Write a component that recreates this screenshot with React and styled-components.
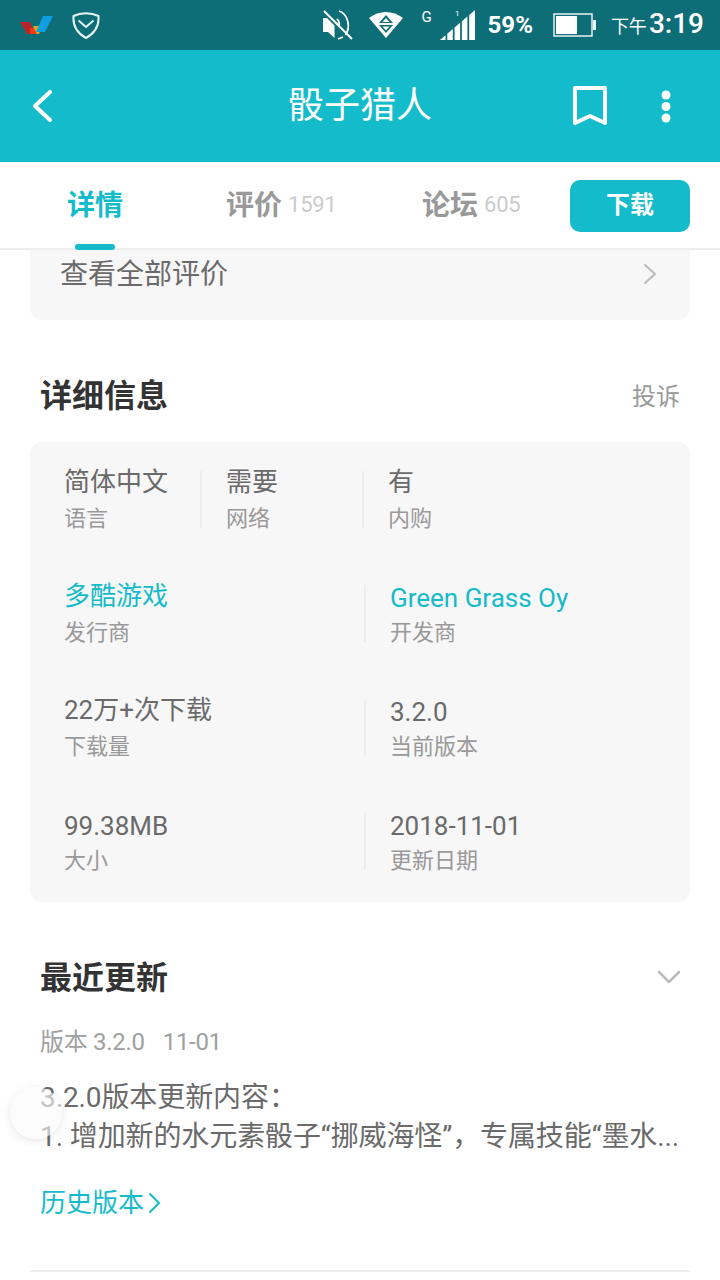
import React from 'react';
import styled, { createGlobalStyle } from 'styled-components';

const TEAL = '#14bbca';

const Global = createGlobalStyle`
  html, body {
    margin: 0;
    padding: 0;
    background: #fff;
  }
  body {
    font-family: Roboto, 'Noto Sans CJK SC', sans-serif;
  }
  * {
    box-sizing: border-box;
  }
`;

const Page = styled.div`
  position: relative;
  width: 720px;
  height: 1280px;
  overflow: hidden;
  background: #fff;
`;

const StatusBar = styled.div`
  height: 50px;
  background: #0e6e78;
  display: flex;
  align-items: center;
  padding: 0 16px 0 20px;
  color: #fff;
`;

const StatusLeft = styled.div`
  display: flex;
  align-items: center;
  gap: 18px;
  flex: 1;
`;

const StatusRight = styled.div`
  display: flex;
  align-items: center;
`;

const StatusIcon = styled.span`
  display: flex;
  margin-right: ${(p) => p.$mr}px;
`;

const NetType = styled.span`
  font-size: 15px;
  line-height: 15px;
  width: 18px;
  margin-bottom: 16px;
`;

const Percent = styled.span`
  font-size: 24px;
  font-weight: 700;
  margin: 0 20px 0 13px;
  line-height: 50px;
`;

const Clock = styled.span`
  display: flex;
  align-items: baseline;
  font-size: 28px;
  font-weight: 500;
  margin-left: 14px;
  line-height: 50px;
`;

const ClockPrefix = styled.span`
  font-size: 18px;
  font-weight: 400;
  margin-right: 2px;
`;

const Header = styled.div`
  height: 112px;
  background: ${TEAL};
  display: grid;
  grid-template-columns: 180px 1fr 180px;
  align-items: center;
  color: #fff;
`;

const Back = styled.div`
  display: flex;
  padding-left: 33px;
`;

const Title = styled.div`
  text-align: center;
  font-size: 36px;
  line-height: 110px;
`;

const HeaderActions = styled.div`
  display: flex;
  justify-content: flex-end;
  align-items: center;
  gap: 54px;
  padding-right: 49px;
`;

const Tabs = styled.div`
  position: relative;
  z-index: 2;
  height: 88px;
  background: #fff;
  border-bottom: 2px solid #eeeeee;
  display: flex;
  align-items: flex-start;
  padding: 18px 30px 0 0;
`;

const Tab = styled.div`
  position: relative;
  height: 68px;
  width: ${(p) => p.$w}px;
  margin-left: ${(p) => p.$ml}px;
  display: flex;
  align-items: baseline;
  white-space: nowrap;
  line-height: 51px;
  font-size: 28px;
  font-weight: 700;
  color: ${(p) => (p.$active ? TEAL : '#999999')};
`;

const TabCount = styled.span`
  align-self: flex-start;
  font-size: 22px;
  line-height: 50px;
  font-weight: 400;
  letter-spacing: -0.2px;
  color: #cccccc;
  margin-left: 6px;
`;

const Indicator = styled.div`
  position: absolute;
  left: 8px;
  bottom: -2px;
  width: 40px;
  height: 6px;
  border-radius: 3px;
  background: ${TEAL};
`;

const DownloadButton = styled.div`
  margin-left: auto;
  width: 120px;
  height: 52px;
  border-radius: 10px;
  background: ${TEAL};
  color: #fff;
  font-size: 24px;
  font-weight: 700;
  text-align: center;
  line-height: 50px;
`;

const ReviewCard = styled.div`
  margin: 0 30px;
  height: 70px;
  background: #f7f7f7;
  border-radius: 0 0 12px 12px;
  display: flex;
  justify-content: space-between;
  padding: 0 33px 0 30px;
  color: #6a6a6a;
  font-size: 28px;
  line-height: 50px;
`;

const ReviewArrow = styled.div`
  padding-top: 13px;
  line-height: 0;
`;

const SectionHead = styled.div`
  margin-top: 50px;
  margin-bottom: ${(p) => p.$mb}px;
  padding: 0 40px 4px;
  height: 50px;
  display: flex;
  justify-content: space-between;
  align-items: center;
`;

const SectionTitle = styled.div`
  font-size: 32px;
  font-weight: 700;
  color: #333333;
`;

const Complain = styled.div`
  font-size: 24px;
  color: #999999;
  margin-top: 2px;
`;

const DownArrow = styled.div`
  display: flex;
  margin: 4px -1px 0 0;
`;

const InfoCard = styled.div`
  margin: 0 30px;
  height: 460px;
  background: #f7f7f7;
  border-radius: 12px;
  padding: 21px 0 0 34px;
  display: grid;
  grid-auto-rows: 114px;
`;

const InfoRow = styled.div`
  display: grid;
  grid-template-columns: ${(p) => p.$cols};
  align-items: start;
`;

const Cell = styled.div`
  height: 60px;
  padding-left: ${(p) => (p.$divided ? 26 : 0)}px;
  position: relative;
  &::before {
    content: '';
    display: ${(p) => (p.$divided ? 'block' : 'none')};
    position: absolute;
    left: 0;
    top: 8px;
    bottom: -5px;
    width: 2px;
    background: #ededed;
  }
`;

const CellValue = styled.div`
  font-size: 26px;
  height: 38px;
  line-height: 38px;
  white-space: nowrap;
  padding-top: ${(p) => (p.$latin ? 2 : 0)}px;
  color: ${(p) => (p.$link ? TEAL : '#6a6a6a')};
`;

const CellLabel = styled.div`
  font-size: 22px;
  line-height: 36px;
  color: #999999;
  white-space: nowrap;
`;

const Updates = styled.div`
  padding: 0 40px;
`;

const VersionLine = styled.div`
  margin-top: 22px;
  font-size: 24px;
  color: #a0a0a0;
  line-height: 36px;
  display: flex;
  gap: 18px;
  letter-spacing: -0.3px;
`;

const Notes = styled.div`
  margin-top: 18px;
  font-size: 28px;
  line-height: 39px;
  color: #6a6a6a;
  white-space: nowrap;
  letter-spacing: -0.1px;
`;

const HistoryLink = styled.div`
  margin-top: 27px;
  display: flex;
  align-items: center;
  gap: 4px;
  color: ${TEAL};
  font-size: 26px;
  line-height: 40px;
`;

const Rule = styled.div`
  margin: 47px 30px 0;
  height: 2px;
  background: #eeeeee;
`;

const FloatBall = styled.div`
  position: absolute;
  left: 10px;
  top: 1087px;
  width: 52px;
  height: 52px;
  border-radius: 50%;
  background: rgba(250, 250, 250, 0.62);
  box-shadow: 0 2px 10px rgba(0, 0, 0, 0.1);
`;

function AppLogo() {
  return (
    <svg width="34" height="19" viewBox="0 0 34 19">
      <path d="M0 6h10l5 12H7z" fill="#b9232a" />
      <path d="M10 12h6l2 6h-8z" fill="#f23c10" />
      <path d="M13 10h9l-3 8h-2z" fill="#d9ad1f" />
      <path d="M23 0h10l-8 16h-9z" fill="#0f9fe0" />
    </svg>
  );
}

function ShieldIcon() {
  return (
    <svg width="28" height="27" viewBox="0 0 28 27" fill="none" stroke="#e6f4f5" strokeWidth="2">
      <path d="M14 1.2c4.500 0 8.500 .8 12.500 2.800 .6 8-1.500 16-12.500 22C3 20 .9 12 1.500 4 5.500 2 9.500 1.200 14 1.200z" />
      <path d="M6.500 8.500 14 15l7.500-6.500" />
    </svg>
  );
}

function MuteIcon() {
  return (
    <svg width="30" height="30" viewBox="0 0 30 30" fill="none" stroke="#fff">
      <path d="M0 8h4l7.500 7.500V28L5 22H0z" fill="#fff" stroke="none" />
      <path d="M14 9c2 2 2.500 5 2 7M16 1c9 3 12 16 6.500 24M15 29l5-2" strokeWidth="1.800" />
      <path d="M1 1l28 28" strokeWidth="2" />
    </svg>
  );
}

function WifiIcon() {
  return (
    <svg width="34" height="26" viewBox="0 0 34 26">
      <path d="M0 6C10-2 24-2 34 6L17 26z" fill="#fff" />
      <path d="M17 3l7 8H10z" fill="#0e6e78" />
      <path d="M17 6l3.500 4h-7z" fill="#fff" />
      <path d="M10 13h14l-7 8z" fill="#0e6e78" />
      <path d="M13.500 14.500h7L17 18.500z" fill="#fff" />
    </svg>
  );
}

const SIGNAL_BARS = [[0, 5.5], [7.3, 12.8], [14.6, 20.1], [21.9, 27.4], [29.2, 35]];

function SignalIcon() {
  const topAt = (x) => 31 - (x * 30) / 35;
  return (
    <svg width="35" height="32" viewBox="0 0 35 32" fill="#fff">
      <text x="15" y="7" fontSize="8" fontFamily="Roboto">1</text>
      {SIGNAL_BARS.map(([a, b]) => (
        <path key={a} d={`M${a} ${topAt(a)}L${b} ${topAt(b)}V31H${a}z`} />
      ))}
    </svg>
  );
}

function BatteryIcon() {
  return (
    <svg width="44" height="24" viewBox="0 0 44 24">
      <rect x="1" y="1" width="38" height="22" fill="none" stroke="#e8f2f3" strokeWidth="1.500" />
      <rect x="3" y="3" width="21" height="18" fill="#fff" />
      <rect x="40" y="7" width="3" height="10" fill="#e8f2f3" />
    </svg>
  );
}

const CHEVRON_POINTS = {
  left: (w, h) => `M${w - 2} 2 2 ${h / 2} ${w - 2} ${h - 2}`,
  right: (w, h) => `M2 2 ${w - 2} ${h / 2} 2 ${h - 2}`,
  down: (w, h) => `M2 2 ${w / 2} ${h - 2} ${w - 2} 2`,
};

function Chevron({ w, h, color, sw, dir = 'right' }) {
  return (
    <svg width={w} height={h} viewBox={`0 0 ${w} ${h}`} fill="none" stroke={color} strokeWidth={sw} strokeLinecap="round" strokeLinejoin="round">
      <path d={CHEVRON_POINTS[dir](w, h)} />
    </svg>
  );
}

function BookmarkIcon() {
  return (
    <svg width="34" height="40" viewBox="0 0 34 40" fill="none" stroke="#fff" strokeWidth="4" strokeLinejoin="round">
      <path d="M2 2h30v35l-15-7-15 7z" />
    </svg>
  );
}

function MoreIcon() {
  return (
    <svg width="10" height="33" viewBox="0 0 10 33" fill="#fff">
      <circle cx="5" cy="5" r="4.500" />
      <circle cx="5" cy="16.500" r="4.500" />
      <circle cx="5" cy="28" r="4.500" />
    </svg>
  );
}

const INFO_ROWS = [
  {
    cols: '136px 162px 1fr',
    cells: [
      { value: '简体中文', label: '语言' },
      { value: '需要', label: '网络', divided: true },
      { value: '有', label: '内购', divided: true },
    ],
  },
  {
    cols: '300px 1fr',
    cells: [
      { value: '多酷游戏', label: '发行商', link: true },
      { value: 'Green Grass Oy', label: '开发商', link: true, latin: true, divided: true },
    ],
  },
  {
    cols: '300px 1fr',
    cells: [
      { value: '22万+次下载', label: '下载量' },
      { value: '3.2.0', label: '当前版本', latin: true, divided: true },
    ],
  },
  {
    cols: '300px 1fr',
    cells: [
      { value: '99.38MB', label: '大小', latin: true },
      { value: '2018-11-01', label: '更新日期', latin: true, divided: true },
    ],
  },
];

export default function App() {
  return (
    <Page>
      <Global />
      <StatusBar>
        <StatusLeft>
          <AppLogo />
          <ShieldIcon />
        </StatusLeft>
        <StatusRight>
          <StatusIcon $mr={16}>
            <MuteIcon />
          </StatusIcon>
          <StatusIcon $mr={19}>
            <WifiIcon />
          </StatusIcon>
          <NetType>G</NetType>
          <StatusIcon $mr={0}>
            <SignalIcon />
          </StatusIcon>
          <Percent>59%</Percent>
          <BatteryIcon />
          <Clock>
            <ClockPrefix>下午</ClockPrefix>3:19
          </Clock>
        </StatusRight>
      </StatusBar>

      <Header>
        <Back>
          <Chevron w={19} h={32} color="#fff" sw={4} dir="left" />
        </Back>
        <Title>骰子猎人</Title>
        <HeaderActions>
          <BookmarkIcon />
          <MoreIcon />
        </HeaderActions>
      </Header>

      <Tabs>
        <Tab $active $w={54} $ml={67}>
          详情
          <Indicator />
        </Tab>
        <Tab $w={108} $ml={105}>
          评价<TabCount>1591</TabCount>
        </Tab>
        <Tab $w={98} $ml={88}>
          论坛<TabCount>605</TabCount>
        </Tab>
        <DownloadButton>下载</DownloadButton>
      </Tabs>

      <ReviewCard>
        查看全部评价
        <ReviewArrow>
          <Chevron w={14} h={22} color="#bbbbbb" sw={2} />
        </ReviewArrow>
      </ReviewCard>

      <SectionHead $mb={22}>
        <SectionTitle>详细信息</SectionTitle>
        <Complain>投诉</Complain>
      </SectionHead>

      <InfoCard>
        {INFO_ROWS.map((row, i) => (
          <InfoRow key={i} $cols={row.cols}>
            {row.cells.map((c, j) => (
              <Cell key={j} $divided={c.divided}>
                <CellValue $link={c.link} $latin={c.latin}>{c.value}</CellValue>
                <CellLabel>{c.label}</CellLabel>
              </Cell>
            ))}
          </InfoRow>
        ))}
      </InfoCard>

      <SectionHead $mb={0}>
        <SectionTitle>最近更新</SectionTitle>
        <DownArrow>
          <Chevron w={24} h={14} color="#bbbbbb" sw={2.500} dir="down" />
        </DownArrow>
      </SectionHead>

      <Updates>
        <VersionLine>
          <span>版本 3.2.0</span>
          <span>11-01</span>
        </VersionLine>
        <Notes>
          3.2.0版本更新内容：
          <br />
          1. 增加新的水元素骰子“挪威海怪”，专属技能“墨水...
        </Notes>
        <HistoryLink>
          历史版本
          <Chevron w={13} h={22} color={TEAL} sw={2} />
        </HistoryLink>
      </Updates>

      <Rule />
      <FloatBall />
    </Page>
  );
}
